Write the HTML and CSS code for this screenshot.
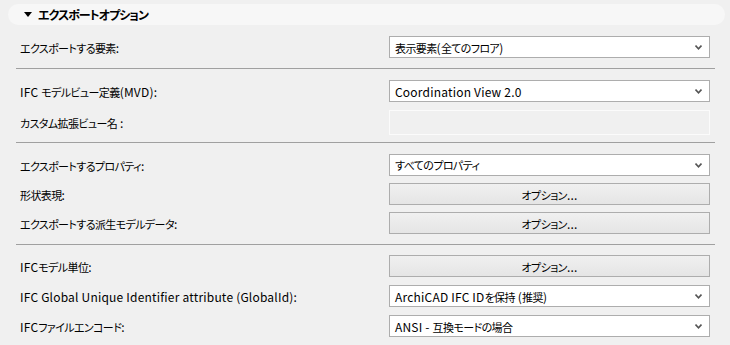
FILE: index.html
```html
<!DOCTYPE HTML>
<html>
<head>
    <meta charset="UTF-8">
    <title>エクスポートオプション</title>
    <link rel="stylesheet" href="styles.css">
</head>
<body>
    <div class="panel-head">
        <span class="arrow"></span>
        <span class="panel-title ja">エクスポートオプション</span>
    </div>

    <div class="section first">
        <div class="row">
            <label><span class="ja">エクスポートする要素</span>:</label>
            <div class="select"><span><span class="ja">表示要素</span>(<span class="ja">全てのフロア</span>)</span><svg width="7" height="5" viewBox="0 0 7 5"><path d="M0.5 0.5 L3.5 3.8 L6.5 0.5" fill="none" stroke="#555" stroke-width="1.6"/></svg></div>
        </div>
    </div>

    <div class="section second">
        <div class="row">
            <label>IFC <span class="ja">モデルビュー定義</span>(MVD):</label>
            <div class="select"><span>Coordination View 2.0</span><svg width="7" height="5" viewBox="0 0 7 5"><path d="M0.5 0.5 L3.5 3.8 L6.5 0.5" fill="none" stroke="#555" stroke-width="1.6"/></svg></div>
        </div>
        <div class="row">
            <label><span class="ja">カスタム拡張ビュー名</span> :</label>
            <div class="textfield"></div>
        </div>
    </div>

    <div class="section third">
        <div class="row">
            <label><span class="ja">エクスポートするプロパティ</span>:</label>
            <div class="select"><span class="ja">すべてのプロパティ</span><svg width="7" height="5" viewBox="0 0 7 5"><path d="M0.5 0.5 L3.5 3.8 L6.5 0.5" fill="none" stroke="#555" stroke-width="1.6"/></svg></div>
        </div>
        <div class="row">
            <label><span class="ja">形状表現</span>:</label>
            <button><span class="ja">オプション</span>...</button>
        </div>
        <div class="row">
            <label><span class="ja">エクスポートする派生モデルデータ</span>:</label>
            <button><span class="ja">オプション</span>...</button>
        </div>
    </div>

    <div class="section last">
        <div class="row">
            <label>IFC<span class="ja">モデル単位</span>:</label>
            <button><span class="ja">オプション</span>...</button>
        </div>
        <div class="row">
            <label>IFC Global Unique Identifier attribute (GlobalId):</label>
            <div class="select"><span>ArchiCAD IFC ID<span class="ja">を保持</span> (<span class="ja">推奨</span>)</span><svg width="7" height="5" viewBox="0 0 7 5"><path d="M0.5 0.5 L3.5 3.8 L6.5 0.5" fill="none" stroke="#555" stroke-width="1.6"/></svg></div>
        </div>
        <div class="row">
            <label>IFC<span class="ja">ファイルエンコード</span>:</label>
            <div class="select"><span>ANSI - <span class="ja">互換モードの場合</span></span><svg width="7" height="5" viewBox="0 0 7 5"><path d="M0.5 0.5 L3.5 3.8 L6.5 0.5" fill="none" stroke="#555" stroke-width="1.6"/></svg></div>
        </div>
    </div>
</body>
</html>
```

FILE: styles.css
```css
html, body {
    height: 100%;
}

body {
    margin: 0;
    background-color: #f0f0f0;
    font-family: "Noto Sans CJK JP", "Noto Sans", sans-serif;
    font-size: 12px;
    letter-spacing: 0.2px;
    color: #000;
}

/* japanese runs: narrower, like the windows ui font */
.ja {
    font-size: 11px;
    font-feature-settings: "palt";
    letter-spacing: -0.6px;
}

.panel-head {
    display: flex;
    align-items: center;
    height: 21px;
    margin: 4px 5px 0 8px;
    padding-left: 16px;
    border-radius: 11px;
    background-color: #f7f7f7;
}

.arrow {
    width: 0;
    height: 0;
    border-left: 4px solid transparent;
    border-right: 4px solid transparent;
    border-top: 5px solid #000;
    margin-right: 6px;
}

.panel-title {
    font-weight: bold;
    font-size: 12px;
    letter-spacing: -1px;
}

.section {
    margin: 0 15px 0 16px;
    padding: 11px 0 10px;
    border-bottom: 1px solid #a0a0a0;
    display: flex;
    flex-direction: column;
    gap: 7px;
}

.section.second {
    gap: 8px;
    padding-bottom: 7px;
}

.section.last {
    border-bottom: none;
    padding-top: 10px;
    gap: 8px;
}

.row {
    display: grid;
    grid-template-columns: 373px 321px;
    align-items: center;
}

label {
    padding-left: 4px;
    white-space: nowrap;
}

.select {
    box-sizing: border-box;
    height: 22px;
    border: 1px solid #adadad;
    background-color: #fff;
    display: flex;
    align-items: center;
    justify-content: space-between;
    padding: 0 7px 0 5px;
}

.textfield {
    box-sizing: border-box;
    height: 25px;
    border: 1px solid #fbfbfb;
    background-color: #f0f0f0;
}

button {
    box-sizing: border-box;
    height: 22px;
    border: 1px solid #adadad;
    background: linear-gradient(#f0f0f0, #e5e5e5);
    font-family: inherit;
    font-size: 12px;
    letter-spacing: 0.2px;
    color: #000;
    padding: 0;
}
```
